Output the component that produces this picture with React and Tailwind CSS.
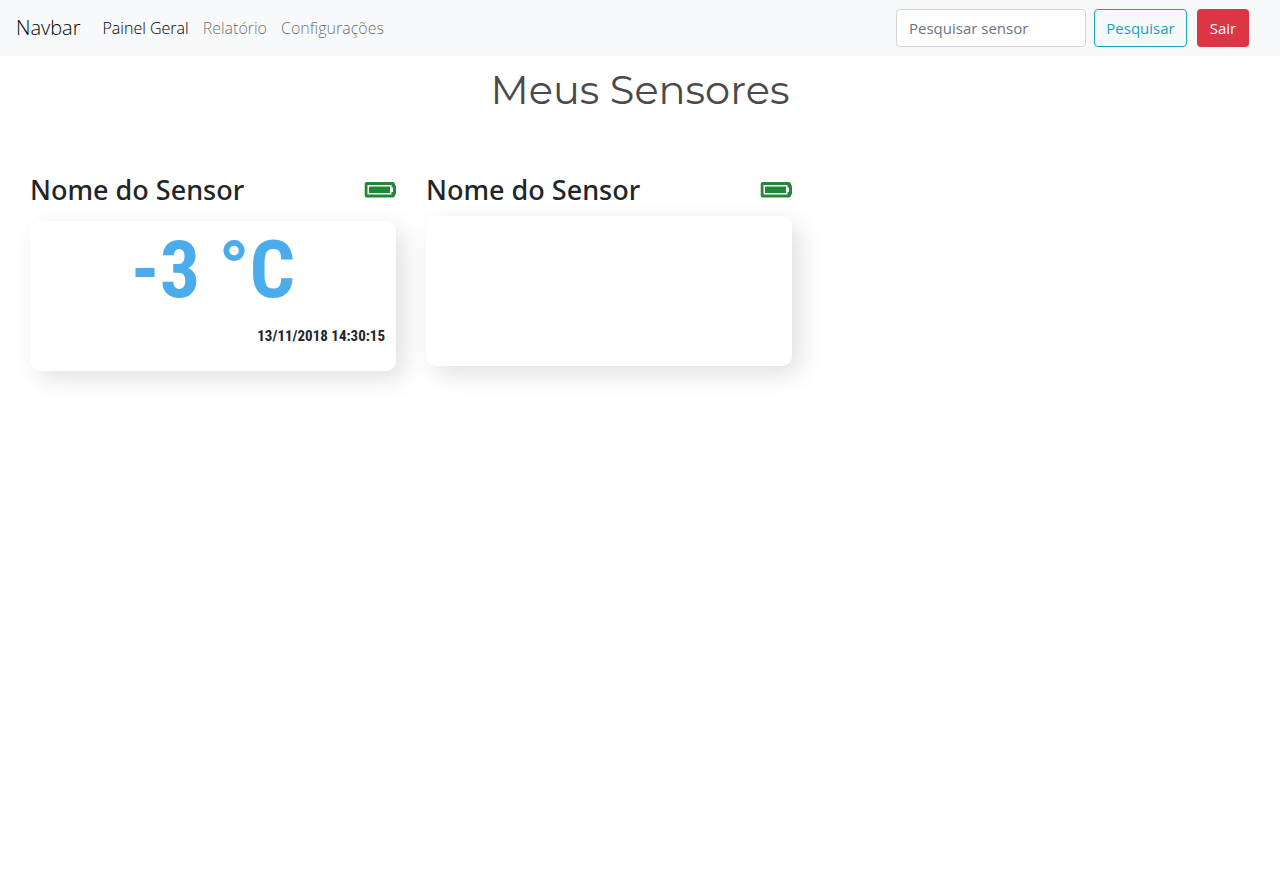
const sensors = [
  { id: 1, name: "Nome do Sensor", reading: "-3 °C", time: "13/11/2018 14:30:15" },
  { id: 2, name: "Nome do Sensor" },
];

function BatteryIcon() {
  return (
    <svg viewBox="0 0 32 16" className="h-4 w-8 shrink-0" role="img" aria-label="Bateria cheia">
      <path
        fill="#218838"
        fillRule="evenodd"
        d="M2.700 0H28.5Q31 0 31 2.5V3Q32 3.500 32 5V11Q32 12.500 31 13Q31 15.500 28.500 15.500H2.700Q.7 15.500 .7 13.500V2Q.7 0 2.700 0ZM3.500 3V12.500H27.500V10H29V5.500H27.500V3Z"
      />
      <rect x="5" y="4.500" width="21" height="6.500" fill="#218838" />
    </svg>
  );
}

function Navbar() {
  return (
    <nav className="flex h-14 items-center bg-[#f8f9fa] pr-[31px] pl-4">
      <a href="#" className="text-[20px] leading-[30px] font-light text-black">Navbar</a>
      <ul className="ml-[22px] flex gap-3.5 text-[16px] leading-6 font-light">
        <li><a href="#painel" className="text-black">Painel Geral</a></li>
        <li><a href="#relatorio" className="text-black/60">Relatório</a></li>
        <li><a href="#configuracoes" className="text-black/60">Configurações</a></li>
      </ul>
      <form className="ml-auto flex text-[15px] leading-6" onSubmit={(e) => e.preventDefault()}>
        <input
          type="search"
          aria-label="Pesquisar sensor"
          placeholder="Pesquisar sensor"
          className="h-[38px] w-[190px] rounded border border-[#ced4da] bg-white px-3 placeholder:text-[#6c757d]"
        />
        <button type="submit" className="ml-2 h-[38px] w-[93px] rounded border border-[#17a2b8] text-[#17a2b8]">
          Pesquisar
        </button>
        <button type="button" className="ml-[10px] h-[38px] w-[52px] rounded bg-[#dc3545] text-white">
          Sair
        </button>
      </form>
    </nav>
  );
}

function SensorCard({ sensor }) {
  return (
    <section>
      <header className="flex items-center justify-between">
        <h2 className="font-['Noto_Sans','Open_Sans',sans-serif] text-[27px] leading-[34px] font-medium text-[#212529]">{sensor.name}</h2>
        <BatteryIcon />
      </header>
      <div
        className={`h-[150px] rounded-[10px] bg-white px-[11px] font-['Roboto_Condensed','Liberation_Sans_Narrow',sans-serif] font-bold shadow-[8px_8px_25px_rgba(0,0,0,0.12)] ${
          sensor.reading ? "mt-[14px]" : "mt-[9px]"
        }`}
      >
        {sensor.reading && (
          <>
            <p className="text-center text-[80px] leading-[98px] text-[#4baced]">{sensor.reading}</p>
            <p className="mt-1 text-right text-[15px] leading-[26px] text-[#212529]">{sensor.time}</p>
          </>
        )}
      </div>
    </section>
  );
}

export default function App() {
  return (
    <div className="min-h-screen bg-white font-['Open_Sans','Noto_Sans',sans-serif]">
      <Navbar />
      <main>
        <h1 className="pt-2.5 text-center font-['Montserrat','Inter',sans-serif] text-[40px] leading-[48px] font-normal text-[#4a4a4a]">
          Meus Sensores
        </h1>
        <div className="mt-[59px] mr-[92px] ml-[30px] grid grid-cols-3 items-start gap-[30px]">
          {sensors.map((sensor) => (
            <SensorCard key={sensor.id} sensor={sensor} />
          ))}
        </div>
      </main>
    </div>
  );
}
